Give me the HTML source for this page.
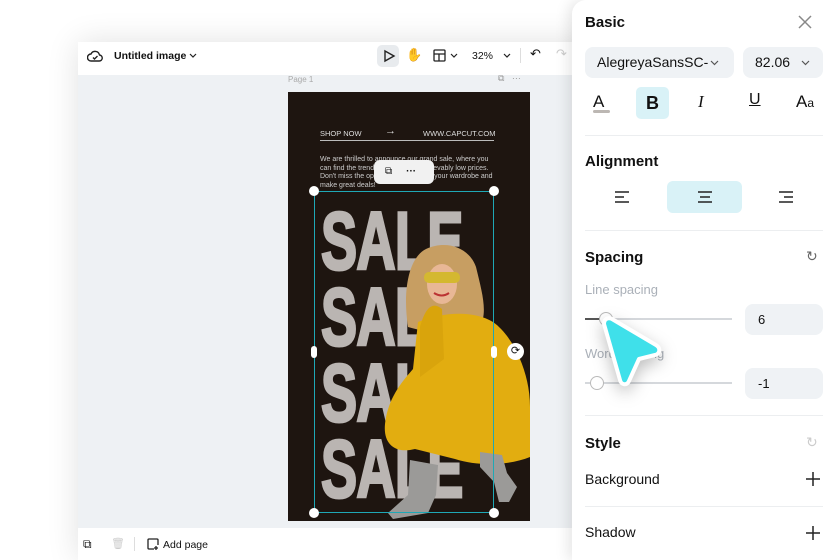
<!DOCTYPE html>
<html><head><meta charset="utf-8"><style>
*{margin:0;padding:0;box-sizing:border-box}
body{width:840px;height:560px;overflow:hidden;background:#fff;font-family:"Liberation Sans",sans-serif;position:relative;color:#111}
.abs{position:absolute}
.win{left:78px;top:42px;width:520px;height:518px;background:#eef1f4;box-shadow:0 0 30px rgba(0,0,0,.12)}
.tb{left:78px;top:42px;width:500px;height:33px;background:#fff}
.bb{left:78px;top:528px;width:500px;height:32px;background:#fff}
.page{left:288px;top:92px;width:242px;height:429px;background:#1e1510;overflow:hidden}
.sale{position:absolute;left:33px;font-weight:bold;font-size:82px;color:#bab5b2;letter-spacing:-1px;line-height:1;transform:scaleX(.66);transform-origin:left;-webkit-text-stroke:3px #bab5b2}
.panel{left:572px;top:0;width:268px;height:560px;background:#fff;border-radius:14px 0 0 0;box-shadow:-4px 0 14px rgba(0,0,0,.1)}
.h{font-weight:bold;font-size:15px;color:#111}
.box{background:#eff2f5;border-radius:8px}
.hr{height:1px;background:#eceef0;left:585px;width:238px}
.track{height:2px;background:#d5d8dc}
.knob{width:14px;height:14px;border-radius:50%;background:#fff;border:1px solid #bbb}
</style></head><body>
<div class="abs win"></div>
<div class="abs tb"></div>
<svg class="abs" style="left:87px;top:48px" width="16" height="16" viewBox="0 0 16 16" fill="none" stroke="#222" stroke-width="1.4"><path d="M4 13h8a3 3 0 0 0 .5-6A4.5 4.5 0 0 0 4 6a3.5 3.5 0 0 0 0 7z"/><path d="M6 9.5l1.5 1.5 3-3"/></svg>
<div class="abs" style="left:114px;top:50px;font-size:10.5px;font-weight:bold">Untitled image</div>
<svg class="abs" style="left:189px;top:53px" width="8" height="6" fill="none" stroke="#222" stroke-width="1.2"><path d="M1 1l3 3 3-3"/></svg>
<div class="abs" style="left:377px;top:45px;width:22px;height:22px;background:#e8ebee;border-radius:5px"></div>
<svg class="abs" style="left:382px;top:49px" width="14" height="14" viewBox="0 0 14 14" fill="none" stroke="#222" stroke-width="1.4"><path d="M3 2l9 5-9 5z"/></svg>
<div class="abs" style="left:406px;top:47px;font-size:13px">✋</div>
<svg class="abs" style="left:433px;top:49px" width="13" height="13" viewBox="0 0 13 13" fill="none" stroke="#222" stroke-width="1.3"><rect x="1" y="1" width="11" height="11" rx="1"/><path d="M1 5h11M6 5v7"/></svg>
<svg class="abs" style="left:450px;top:53px" width="8" height="6" fill="none" stroke="#222" stroke-width="1.2"><path d="M1 1l3 3 3-3"/></svg>
<div class="abs" style="left:472px;top:50px;font-size:10.5px">32%</div>
<svg class="abs" style="left:503px;top:53px" width="8" height="6" fill="none" stroke="#222" stroke-width="1.2"><path d="M1 1l3 3 3-3"/></svg>
<div class="abs" style="left:520px;top:48px;width:1px;height:15px;background:#ddd"></div>
<div class="abs" style="left:530px;top:46px;font-size:13px">↶</div>
<div class="abs" style="left:556px;top:46px;font-size:13px;color:#ccc">↷</div>
<div class="abs" style="left:288px;top:75px;font-size:8px;color:#aaa">Page 1</div>
<div class="abs" style="left:498px;top:73px;font-size:9px;color:#999">⧉ &nbsp; ···</div>
<div class="abs page">
 <div class="abs" style="left:32px;top:37px;font-size:7.5px;color:#ddd">SHOP NOW</div>
 <div class="abs" style="left:97px;top:33px;font-size:11px;color:#ddd">→</div>
 <div class="abs" style="left:135px;top:37px;font-size:7.5px;color:#ddd">WWW.CAPCUT.COM</div>
 <div class="abs" style="left:32px;top:48px;width:174px;height:1px;background:#bbb"></div>
 <div class="abs" style="left:32px;top:64px;width:180px;font-size:7px;line-height:8.7px;color:#ccc">We are thrilled to announce our grand sale, where you can find the trendiest styles at unbelievably low prices. Don't miss the opportunity to refresh your wardrobe and make great deals!</div>
 <div class="sale" style="top:109px">SALE</div>
 <div class="sale" style="top:185px">SALE</div>
 <div class="sale" style="top:261px">SALE</div>
 <div class="sale" style="top:337px">SALE</div>
 <svg class="abs" style="left:0;top:0" width="242" height="429" viewBox="0 0 242 429">
  <path d="M120 235c-6-40 2-70 18-78 22-10 44 0 50 18 6 25 12 45 4 60-15 8-45 8-72 0z" fill="#c79e62"/>
  <ellipse cx="154" cy="192" rx="15" ry="20" fill="#e8b796"/>
  <rect x="136" y="180" width="36" height="11" rx="5" fill="#d4b830"/>
  <path d="M146 201q8 5 15 0" stroke="#b33" stroke-width="2" fill="none"/>
  <path d="M130 230c25-10 55-12 75 0 20 14 37 50 37 85v50c-20 8-50 10-75 2l-40-10c-20 5-32-5-30-25 3-25 15-40 28-55z" fill="#e2ad10"/>
  <path d="M132 235q8-30 22-18l2 50-24 18z" fill="#d9a40c"/>
  <path d="M122 368l28 5-2 30-8 18-35 6-5-6 20-18z" fill="#9b9a98"/>
  <path d="M192 360l22 3 5 18 10 14-8 15-10 0-5-20-14-15z" fill="#9b9a98"/>
 </svg>
</div>
<div class="abs" style="left:314px;top:191px;width:180px;height:322px;border:1.5px solid #1fa8b6"></div>
<div class="abs" style="left:309px;top:186px;width:10px;height:10px;border-radius:50%;background:#fff"></div>
<div class="abs" style="left:489px;top:186px;width:10px;height:10px;border-radius:50%;background:#fff"></div>
<div class="abs" style="left:309px;top:508px;width:10px;height:10px;border-radius:50%;background:#fff"></div>
<div class="abs" style="left:489px;top:508px;width:10px;height:10px;border-radius:50%;background:#fff"></div>
<div class="abs" style="left:311px;top:346px;width:6px;height:12px;border-radius:3px;background:#fff"></div>
<div class="abs" style="left:491px;top:346px;width:6px;height:12px;border-radius:3px;background:#fff"></div>
<div class="abs" style="left:507px;top:343px;width:17px;height:17px;border-radius:50%;background:#fff;font-size:11px;text-align:center;line-height:17px">⟳</div>
<div class="abs" style="left:374px;top:160px;width:60px;height:24px;border-radius:6px;background:#f1f1f1;font-size:10px;line-height:24px"><span style="margin-left:11px">⧉</span><span style="margin-left:14px;font-weight:bold">···</span></div>
<div class="abs bb"></div>
<div class="abs" style="left:83px;top:537px;font-size:12px">⧉</div>
<div class="abs" style="left:111px;top:537px;font-size:11px;color:#ccc">🗑</div>
<div class="abs" style="left:134px;top:537px;width:1px;height:14px;background:#ddd"></div>
<svg class="abs" style="left:147px;top:538px" width="12" height="12" viewBox="0 0 12 12" fill="none" stroke="#222" stroke-width="1.3"><path d="M7 11H2a1 1 0 0 1-1-1V2a1 1 0 0 1 1-1h8a1 1 0 0 1 1 1v5M9 8v4M7 10h4"/></svg>
<div class="abs" style="left:163px;top:539px;font-size:10.5px">Add page</div>
<div class="abs panel"></div>
<div class="abs h" style="left:585px;top:14px">Basic</div>
<svg class="abs" style="left:798px;top:15px" width="14" height="14" fill="none" stroke="#888" stroke-width="1.5"><path d="M1 1l12 12M13 1L1 13"/></svg>
<div class="abs box" style="left:585px;top:47px;width:149px;height:31px"></div>
<div class="abs" style="left:597px;top:54px;font-size:14px">AlegreyaSansSC-</div>
<svg class="abs" style="left:710px;top:60px" width="9" height="6" fill="none" stroke="#555" stroke-width="1.2"><path d="M1 1l3.5 3.5L8 1"/></svg>
<div class="abs box" style="left:743px;top:47px;width:80px;height:31px"></div>
<div class="abs" style="left:755px;top:54px;font-size:14px">82.06</div>
<svg class="abs" style="left:801px;top:60px" width="9" height="6" fill="none" stroke="#555" stroke-width="1.2"><path d="M1 1l3.5 3.5L8 1"/></svg>
<div class="abs" style="left:593px;top:92px;font-size:17px">A</div>
<div class="abs" style="left:593px;top:110px;width:17px;height:3px;background:#bcb7b3;border-radius:2px"></div>
<div class="abs" style="left:636px;top:87px;width:33px;height:32px;background:#d9f2f7;border-radius:5px"></div>
<div class="abs" style="left:646px;top:93px;font-size:18px;font-weight:bold">B</div>
<div class="abs" style="left:698px;top:92px;font-size:17px;font-style:italic;font-family:'Liberation Serif',serif">I</div>
<div class="abs" style="left:749px;top:91px;font-size:16px;text-decoration:underline">U</div>
<div class="abs" style="left:796px;top:92px;font-size:17px">A<span style="font-size:12px">a</span></div>
<div class="abs hr" style="top:135px"></div>
<div class="abs h" style="left:585px;top:153px">Alignment</div>
<div class="abs" style="left:667px;top:181px;width:75px;height:32px;background:#d9f2f7;border-radius:6px"></div>
<svg class="abs" style="left:614px;top:190px" width="200" height="14" fill="none" stroke="#222" stroke-width="1.4"><path d="M1 2h14M1 7h9M1 12h14"/><path d="M84 2h14M86 7h10M84 12h14"/><path d="M165 2h14M170 7h9M165 12h14"/></svg>
<div class="abs hr" style="top:230px"></div>
<div class="abs h" style="left:585px;top:249px">Spacing</div>
<div class="abs" style="left:806px;top:248px;font-size:14px;color:#666">↻</div>
<div class="abs" style="left:585px;top:282px;font-size:13px;color:#aab0b8">Line spacing</div>
<div class="abs track" style="left:585px;top:318px;width:147px"></div>
<div class="abs" style="left:585px;top:318px;width:17px;height:2px;background:#555"></div>
<div class="abs knob" style="left:599px;top:312px"></div>
<div class="abs box" style="left:745px;top:304px;width:78px;height:31px"></div>
<div class="abs" style="left:758px;top:312px;font-size:13px">6</div>
<div class="abs" style="left:585px;top:346px;font-size:13px;color:#aab0b8">Word spacing</div>
<div class="abs track" style="left:585px;top:382px;width:147px"></div>
<div class="abs knob" style="left:590px;top:376px"></div>
<div class="abs box" style="left:745px;top:368px;width:78px;height:31px"></div>
<div class="abs" style="left:758px;top:376px;font-size:13px">-1</div>
<svg class="abs" style="left:596px;top:314px;filter:drop-shadow(0 6px 8px rgba(0,0,0,.25))" width="70" height="76" viewBox="0 0 70 76"><path d="M8 10c0-5 4-7 8-5l44 26c5 3 4 9-1 10l-16 4-10 22c-2 5-8 4-9-1z" fill="#3fe0ea" stroke="#fff" stroke-width="4" stroke-linejoin="round"/></svg>
<div class="abs hr" style="top:415px"></div>
<div class="abs h" style="left:585px;top:435px">Style</div>
<div class="abs" style="left:806px;top:434px;font-size:14px;color:#ccc">↻</div>
<div class="abs" style="left:585px;top:471px;font-size:14px">Background</div>
<svg class="abs" style="left:806px;top:472px" width="14" height="14" stroke="#222" stroke-width="1.5"><path d="M7 0v14M0 7h14"/></svg>
<div class="abs hr" style="top:506px"></div>
<div class="abs" style="left:585px;top:524px;font-size:14px">Shadow</div>
<svg class="abs" style="left:806px;top:526px" width="14" height="14" stroke="#222" stroke-width="1.5"><path d="M7 0v14M0 7h14"/></svg>
</body></html>
